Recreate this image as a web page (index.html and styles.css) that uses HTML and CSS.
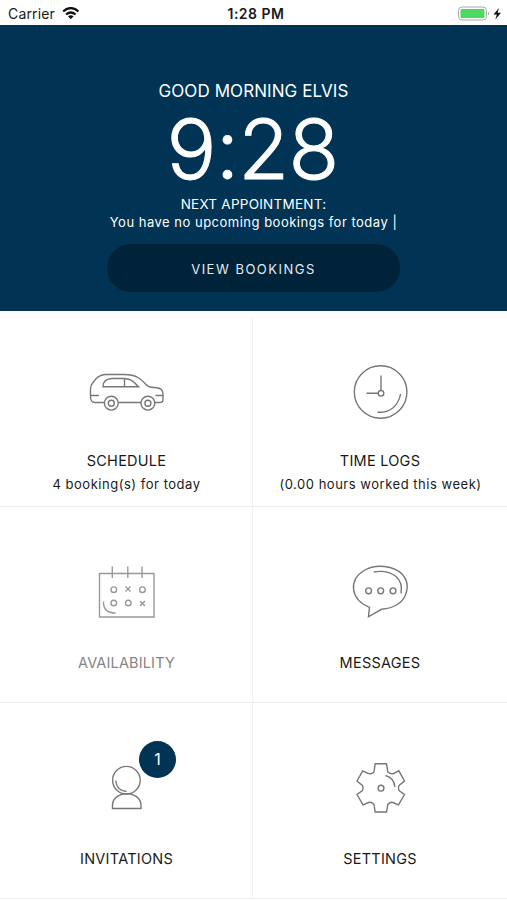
FILE: index.html
```html
<!DOCTYPE html>
<html lang="en">
<head>
<meta charset="utf-8">
<title>Home</title>
<link rel="stylesheet" href="styles.css">
</head>
<body>
<div class="status">
  <div class="carrier"><span>Carrier</span>
    <svg width="18" height="14" viewBox="62 6.5 18 14" fill="none" stroke="#111" stroke-width="2.2"><path d="M63.2 10.8Q70.8 4.3 78.4 10.8M66 14Q70.8 10 75.6 14"/><path d="M68 15.8Q70.8 13.8 73.6 15.8L70.8 18.8Z" fill="#111" stroke="none"/></svg>
  </div>
  <div class="clock">1:28 PM</div>
  <svg class="battery" width="46" height="16" viewBox="457 5.5 46 16"><rect x="458.500" y="6.500" width="28" height="13" rx="3.500" fill="#fff" stroke="#aaa"/><rect x="460.500" y="8.500" width="24" height="9" rx="1" fill="#4cd964"/><path d="M488 11Q490.200 13 488 15Z" fill="#aaa"/><path d="M499 7.500L493.500 14H496.800L495.300 19L501 12.200H497.600Z" fill="#111"/></svg>
</div>
<header class="hero">
  <div class="greeting">GOOD MORNING ELVIS</div>
  <div class="time">9:28</div>
  <div class="next">NEXT APPOINTMENT:</div>
  <div class="note">You have no upcoming bookings for today |</div>
  <a class="button">VIEW BOOKINGS</a>
</header>
<main class="grid">
  <section class="cell">
    <svg class="icon" viewBox="76 352 100 80"><path d="M104.400 402.500H94.500Q90.500 402 90.500 397V389Q90.500 385.500 93 382.500L96 378.800Q99.500 375 105 374.500H124Q133 374.500 138 377.500Q142 380 146 384.500Q148 387 151 387.300L157 387.800Q163 388.800 163 394V400Q163 402.500 159 402.500H154.800M141 402.500H118.200M91 395.500H99M155.500 395.500H163M103 386.800H138.500Q135 382.500 131 380.200Q128 378.500 124 378.500H112Q103 378.800 103 386.800ZM124.500 378.500V386.800"/><circle cx="111.300" cy="403.200" r="6.900"/><circle cx="111.300" cy="403.200" r="3"/><circle cx="147.900" cy="403.200" r="6.900"/><circle cx="147.900" cy="403.200" r="3"/></svg>
    <h2>SCHEDULE</h2>
    <p>4 booking(s) for today</p>
  </section>
  <section class="cell">
    <svg class="icon" viewBox="330 352 100 80"><circle cx="380.600" cy="392" r="26.300"/><circle cx="381" cy="393.300" r="2.800"/><path d="M381 390.500V375.500M378.200 393.300H366.500M400.600 394Q399 403 392.500 408.200Q386 413 377.500 412.200"/></svg>
    <h2>TIME LOGS</h2>
    <p>(0.00 hours worked this week)</p>
  </section>
  <section class="cell muted">
    <svg class="icon" viewBox="76 551.500 100 80"><path d="M99.500 573H154V616.500H99.500ZM112.300 566V577.500M127.800 566V577.500M142 566V577.500M103.500 601Q103 612.500 115.500 612.500M125.500 586L130.500 591M130.500 586L125.500 591M140 600.500L145 605.500M145 600.500L140 605.500"/><circle cx="113.800" cy="589.200" r="2.800"/><circle cx="142.400" cy="589.200" r="2.800"/><circle cx="113.800" cy="602.500" r="2.800"/><circle cx="128.300" cy="602.500" r="2.800"/></svg>
    <h2>AVAILABILITY</h2>
  </section>
  <section class="cell">
    <svg class="icon" viewBox="330 551.500 100 80"><path d="M369.500 606.800C350 599 348.500 579.500 364 570C376 563 394 565 402.500 574C410.500 583 408 598 396.500 604.500Q391 607.800 381.500 608.800L368.500 616.300ZM373.800 571.500Q387 569 396 576Q403 582 401 593"/><circle cx="368.600" cy="590.300" r="2.900"/><circle cx="380.700" cy="590.300" r="2.900"/><circle cx="393" cy="590.300" r="2.900"/></svg>
    <h2>MESSAGES</h2>
  </section>
  <section class="cell">
    <div class="badge">1</div>
    <svg class="icon" viewBox="76 748 100 80"><circle cx="126.400" cy="780.200" r="13.800"/><path d="M115.700 780.500Q116.500 790.500 126.500 791.500M112.500 808.500V804.500C114 790 139.500 790 141 804.500V808.500Z"/></svg>
    <h2>INVITATIONS</h2>
  </section>
  <section class="cell">
    <svg class="icon" viewBox="330 748 100 80"><path d="M375.200 763.700H386.500L387.800 772Q391 774.500 393.500 773.500L398.800 770.800L404.500 781L399 785.500Q397.800 788 399 790.500L404.500 794.500L398.500 804.800L393 802.500Q390.500 801.500 387.800 804.500L386.500 812H375.200L374 804.500Q371 801.500 368.500 802.500L363 804.800L357 794.500L362.500 790.500Q363.700 788 362.500 785.500L357 781L362.700 770.800L368 773.300Q371 774.500 374 772ZM385.500 775.500Q394.300 778 394.800 787"/><circle cx="381" cy="788.200" r="2.900"/></svg>
    <h2>SETTINGS</h2>
  </section>
</main>
</body>
</html>
```
FILE: styles.css
```css
* { box-sizing: border-box; }
body { margin: 0; width: 507px; height: 900px; overflow: hidden; background: #fff; color: #1a1a1a; font-family: Inter, "Liberation Sans", sans-serif; }
.status { display: grid; grid-template-columns: 1fr auto 1fr; align-items: center; height: 25px; padding: 2px 4px 0 8px; font-size: 14px; line-height: 20px; }
.carrier { display: flex; align-items: center; gap: 7px; letter-spacing: 0.15px; }
.clock { padding-left: 1px; font-weight: 600; letter-spacing: 0.5px; }
.battery { justify-self: end; }
.hero { display: flex; flex-direction: column; align-items: center; height: 286px; padding-top: 54px; background: #003354; color: #fff; }
.greeting { padding-top: 1px; font-size: 17px; line-height: 22px; letter-spacing: 0.08px; }
.time { height: 92px; margin-top: 1px; padding-right: 2px; font-size: 83px; line-height: 92px; font-weight: 300; letter-spacing: -0.8px; -webkit-text-stroke: 0.9px #fff; }
.next { font-size: 13.5px; line-height: 18px; letter-spacing: 0.25px; }
.note { font-size: 13px; line-height: 18px; letter-spacing: 0.5px; }
.button { display: flex; align-items: center; justify-content: center; width: 293px; height: 48px; margin-top: 13px; padding-top: 1px; border-radius: 24px; background: #00233a; color: #e2ebf2; font-size: 13px; letter-spacing: 1.5px; }
.grid { display: grid; grid-template-columns: 253px 254px; grid-template-rows: 196px 196px 196px; }
.cell { position: relative; display: flex; flex-direction: column; align-items: center; justify-content: flex-end; padding-bottom: 29px; border-bottom: 1px solid #eee; }
.cell:nth-child(odd) { border-right: 1px solid #f1f1f1; }
.cell:nth-child(-n+2) { padding-bottom: 12px; }
.cell:first-child { border-right-color: transparent; background: linear-gradient(#f1f1f1, #f1f1f1) right bottom / 1px calc(100% - 6px) no-repeat border-box; }
.icon { width: 100px; height: 80px; margin-bottom: 21px; fill: none; stroke: #777; stroke-width: 1.4; }
.cell:nth-child(-n+2) .icon { margin-bottom: 19px; }
h2 { margin: 0; font-size: 14.5px; line-height: 20px; font-weight: 400; letter-spacing: 0.25px; white-space: nowrap; }
p { margin: 3px 0 0; padding-left: 1px; font-size: 13px; line-height: 20px; letter-spacing: 0.52px; white-space: nowrap; }
.cell:nth-child(odd) h2 { padding-left: 1px; }
.muted .icon { stroke: #999; }
.muted h2 { color: #858585; letter-spacing: 0.15px; }
.badge { position: absolute; left: 139px; top: 38px; width: 37px; height: 37px; border-radius: 50%; background: #003354; color: #fff; font-size: 16px; line-height: 36px; text-align: center; }
```
